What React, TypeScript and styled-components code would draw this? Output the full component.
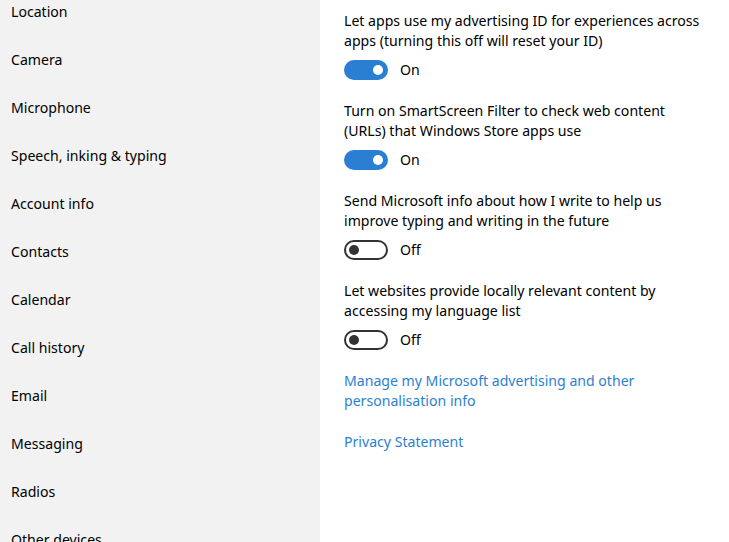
import { createGlobalStyle } from 'styled-components';
import styled from 'styled-components';

const GlobalStyle = createGlobalStyle`
  html, body {
    margin: 0;
    padding: 0;
    height: 100%;
    overflow: hidden;
  }
  body {
    font-family: 'Noto Sans', 'Open Sans', sans-serif;
    font-size: 14.1px;
    color: #000;
    background: #fff;
  }
`;

const navItems = [
  'Location',
  'Camera',
  'Microphone',
  'Speech, inking & typing',
  'Account info',
  'Contacts',
  'Calendar',
  'Call history',
  'Email',
  'Messaging',
  'Radios',
  'Other devices',
];

const settings = [
  {
    label: 'Let apps use my advertising ID for experiences across apps (turning this off will reset your ID)',
    on: true,
  },
  {
    label: 'Turn on SmartScreen Filter to check web content (URLs) that Windows Store apps use',
    on: true,
  },
  {
    label: 'Send Microsoft info about how I write to help us improve typing and writing in the future',
    on: false,
  },
  {
    label: 'Let websites provide locally relevant content by accessing my language list',
    on: false,
  },
];

const App = () => {
  return (
    <>
      <GlobalStyle />
      <Page>
        <Sidebar>
          {navItems.map((item) => (
            <NavItem key={item}>{item}</NavItem>
          ))}
        </Sidebar>
        <Content>
          {settings.map((s) => (
            <Setting key={s.label}>
              <Label>{s.label}</Label>
              <ToggleRow>
                <Toggle $on={s.on}>
                  <Knob $on={s.on} />
                </Toggle>
                <State>{s.on ? 'On' : 'Off'}</State>
              </ToggleRow>
            </Setting>
          ))}
          <Link href="#">
            Manage my Microsoft advertising and other
            <br />
            personalisation info
          </Link>
          <Link href="#">Privacy Statement</Link>
        </Content>
      </Page>
    </>
  );
};

export default App;

const Page = styled.div`
  display: flex;
  width: 729px;
  height: 542px;
  overflow: hidden;
`;

const Sidebar = styled.nav`
  width: 320px;
  flex-shrink: 0;
  background: #f2f2f2;
  padding: 2px 0 0 11px;
  box-sizing: border-box;
  display: flex;
  flex-direction: column;
  gap: 28px;
`;

const NavItem = styled.div`
  line-height: 20px;
  height: 20px;
  white-space: nowrap;
`;

const Content = styled.main`
  flex: 1;
  padding: 11px 0 0 24px;
  display: flex;
  flex-direction: column;
  gap: 21px;
`;

const Setting = styled.section`
  display: flex;
  flex-direction: column;
  gap: 9px;
`;

const Label = styled.p`
  margin: 0;
  line-height: 20px;
  width: 360px;
`;

const ToggleRow = styled.div`
  display: flex;
  align-items: center;
  gap: 12px;
  height: 20px;
`;

const Toggle = styled.div<{ $on: boolean }>`
  width: 44px;
  height: 20px;
  box-sizing: border-box;
  border-radius: 10px;
  background: ${(p) => (p.$on ? '#2b7fd3' : 'transparent')};
  border: 2px solid ${(p) => (p.$on ? '#2b7fd3' : '#333')};
  display: flex;
  align-items: center;
  justify-content: ${(p) => (p.$on ? 'flex-end' : 'flex-start')};
  padding: 0 3px;
`;

const Knob = styled.span<{ $on: boolean }>`
  width: 10px;
  height: 10px;
  border-radius: 50%;
  background: ${(p) => (p.$on ? '#fff' : '#333')};
`;

const State = styled.span`
  line-height: 20px;
`;

const Link = styled.a`
  color: #2b7fd3;
  text-decoration: none;
  line-height: 20px;
`;
